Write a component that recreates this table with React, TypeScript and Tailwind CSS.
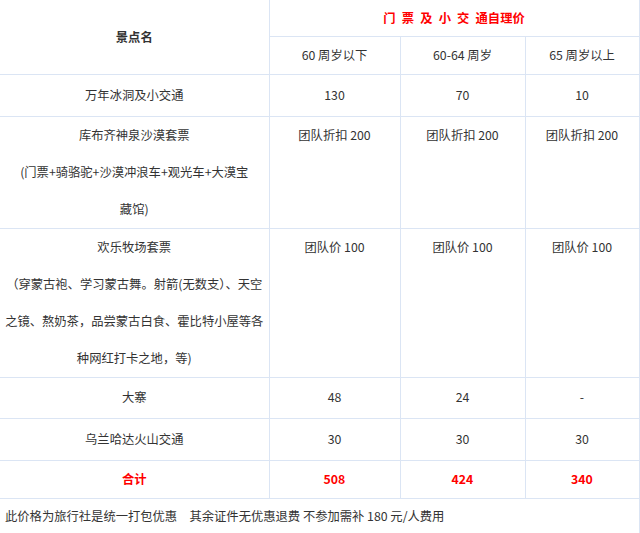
export default function App() {
  const cell = "border-r border-b border-[#dbe5f4] text-center align-middle p-0";
  const font = { fontFamily: '"Noto Sans CJK SC", "Noto Sans", sans-serif' };

  const rows: { name: string[]; values: string[]; h: string; multi?: boolean }[] = [
    { name: ["万年冰洞及小交通"], values: ["130", "70", "10"], h: "h-[42px]" },
    {
      name: ["库布齐神泉沙漠套票", "(门票+骑骆驼+沙漠冲浪车+观光车+大漠宝", "藏馆)"],
      values: ["团队折扣 200", "团队折扣 200", "团队折扣 200"],
      h: "h-[111px]",
      multi: true,
    },
    {
      name: [
        "欢乐牧场套票",
        "（穿蒙古袍、学习蒙古舞。射箭(无数支）、天空",
        "之镜、熬奶茶，品尝蒙古白食、霍比特小屋等各",
        "种网红打卡之地，等)",
      ],
      values: ["团队价 100", "团队价 100", "团队价 100"],
      h: "h-[148px]",
      multi: true,
    },
    { name: ["大寨"], values: ["48", "24", "-"], h: "h-[41px]" },
    { name: ["乌兰哈达火山交通"], values: ["30", "30", "30"], h: "h-[42px]" },
  ];

  return (
    <div className="w-[640px] h-[533px] overflow-hidden bg-white text-[#333] text-[12.3px]" style={font}>
      <table className="table-fixed border-collapse w-[639px]">
        <colgroup>
          <col className="w-[269px]" />
          <col className="w-[131px]" />
          <col className="w-[125px]" />
          <col className="w-[114px]" />
        </colgroup>
        <tbody>
          <tr className="h-[36px]">
            <td rowSpan={2} className={`${cell} font-bold`}>
              景点名
            </td>
            <td colSpan={3} className={`${cell} font-bold text-[#ff0000]`}>
              门{"\u2002"}票{"\u2002"}及{"\u2002"}小{"\u2002"}交{"\u2002"}通自理价
            </td>
          </tr>
          <tr className="h-[38px]">
            <td className={cell}>60 周岁以下</td>
            <td className={cell}>60-64 周岁</td>
            <td className={cell}>65 周岁以上</td>
          </tr>
          {rows.map((r) => (
            <tr key={r.name[0]} className={r.h}>
              <td className={`${cell} ${r.multi ? "align-top leading-[37px]" : ""}`}>
                {r.name.map((line) => (
                  <div key={line} className="whitespace-nowrap">
                    {line}
                  </div>
                ))}
              </td>
              {r.values.map((v, i) => (
                <td key={i} className={`${cell} ${r.multi ? "align-top leading-[37px]" : ""}`}>
                  {v}
                </td>
              ))}
            </tr>
          ))}
          <tr className="h-[38px] font-bold text-[#ff0000]">
            <td className={cell}>合计</td>
            <td className={cell}>508</td>
            <td className={cell}>424</td>
            <td className={cell}>340</td>
          </tr>
          <tr className="h-[36px]">
            <td colSpan={4} className="border-r border-[#dbe5f4] text-left pl-[5px] align-middle">
              此价格为旅行社是统一打包优惠　其余证件无优惠退费 不参加需补 180 元/人费用
            </td>
          </tr>
        </tbody>
      </table>
    </div>
  );
}
